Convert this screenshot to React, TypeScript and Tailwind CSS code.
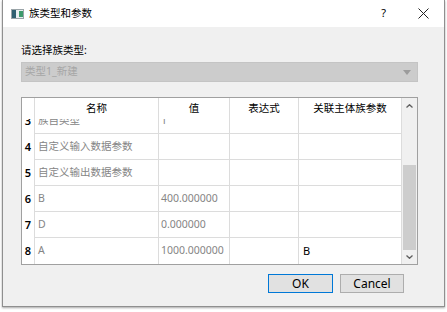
const FONT = { fontFamily: '"Noto Sans", "Noto Sans CJK SC", sans-serif' };

interface Row {
  no: string;
  name: string;
  value: string;
  expr: string;
  assoc: string;
}

const rows: Row[] = [
  { no: "4", name: "自定义输入数据参数", value: "", expr: "", assoc: "" },
  { no: "5", name: "自定义输出数据参数", value: "", expr: "", assoc: "" },
  { no: "6", name: "B", value: "400.000000", expr: "", assoc: "" },
  { no: "7", name: "D", value: "0.000000", expr: "", assoc: "" },
  { no: "8", name: "A", value: "1000.000000", expr: "", assoc: "B" },
];

function AppIcon() {
  return (
    <svg width="13" height="10" viewBox="0 0 13 10">
      <rect x="0.5" y="0.5" width="12" height="9" fill="#e8eef0" stroke="#9aa4a8" />
      <rect x="1" y="1" width="4" height="8" fill="#2f5f70" />
      <rect x="8" y="2" width="4" height="6" fill="#3e9a6c" />
    </svg>
  );
}

function DataRow({ row, last }: { row: Row; last?: boolean }) {
  return (
    <div className="flex h-[26px] text-[10.5px]">
      <div className="w-[13px] shrink-0 border-r border-[#dcdcdc] flex items-center justify-center text-[11px] font-semibold text-black">
        {row.no}
      </div>
      <div className={`w-[124px] shrink-0 border-r border-[#dcdcdc] ${last ? "" : "border-b"} flex items-center pl-[3px] text-[#858585] whitespace-nowrap overflow-hidden`}>
        {row.name}
      </div>
      <div className={`w-[71px] shrink-0 border-r border-[#dcdcdc] ${last ? "" : "border-b"} flex items-center pl-[2px] text-[#858585] whitespace-nowrap overflow-hidden`}>
        {row.value}
      </div>
      <div className={`w-[69px] shrink-0 border-r border-[#dcdcdc] ${last ? "" : "border-b"} flex items-center pl-[3px] text-[#858585]`}>
        {row.expr}
      </div>
      <div className={`w-[103px] shrink-0 border-r border-[#dcdcdc] ${last ? "" : "border-b"} flex items-center pl-[4px] text-[11px] text-black`}>
        {row.assoc}
      </div>
    </div>
  );
}

export default function App() {
  return (
    <div className="w-[447px] h-[312px] bg-white overflow-hidden" style={FONT}>
      <div className="ml-[2px] w-[443px] h-[307px] border-l border-r border-b border-[#8f8f8f] bg-[#f0f0f0] shadow-[0_1px_2px_rgba(0,0,0,0.35)] flex flex-col">
        {/* title bar */}
        <div className="h-[27px] bg-white flex items-center pl-[8px] pr-[15px] shrink-0">
          <AppIcon />
          <span className="ml-[5px] text-[10.5px] text-black">族类型和参数</span>
          <span className="ml-auto mr-[32px] text-[11px] text-black">?</span>
          <svg width="11" height="11" viewBox="0 0 11 11">
            <path d="M0.5 0.5 L10.5 10.5 M10.5 0.5 L0.5 10.5" stroke="#222" strokeWidth="1" />
          </svg>
        </div>

        {/* body */}
        <div className="pl-[18px] flex flex-col">
          <div className="mt-[15px] h-[16px] text-[10.5px] leading-[16px] text-black">请选择族类型:</div>
          <div className="mt-[4px] w-[397px] h-[20px] bg-[#cccccc] border border-[#c4c4c4] flex items-center pl-[3px] pr-[6px] text-[10.5px] text-[#a6a6a6]">
            <span>类型1_新建</span>
            <svg className="ml-auto" width="8" height="5" viewBox="0 0 8 5">
              <path d="M0 0 L8 0 L4 5 Z" fill="#9c9c9c" />
            </svg>
          </div>

          {/* table */}
          <div className="mt-[15px] w-[397px] h-[168px] border border-[#a0a0a0] bg-white flex">
            <div className="flex flex-col w-[380px]">
              {/* header */}
              <div className="flex h-[21px] text-[10.5px] text-black">
                <div className="w-[13px] shrink-0 border-r border-[#dcdcdc]" />
                <div className="w-[124px] shrink-0 border-r border-[#dcdcdc] flex items-center justify-center">名称</div>
                <div className="w-[71px] shrink-0 border-r border-[#dcdcdc] flex items-center justify-center">值</div>
                <div className="w-[69px] shrink-0 border-r border-[#dcdcdc] flex items-center justify-center">表达式</div>
                <div className="w-[103px] shrink-0 border-r border-[#dcdcdc] flex items-center justify-center">关联主体族参数</div>
              </div>
              {/* partially scrolled row */}
              <div className="h-[15px] overflow-hidden">
                <div className="-mt-[11px]">
                  <DataRow row={{ no: "3", name: "族自类型", value: "1", expr: "", assoc: "" }} />
                </div>
              </div>
              {rows.map((r, i) => (
                <DataRow key={r.no} row={r} last={i === rows.length - 1} />
              ))}
            </div>
            {/* scrollbar */}
            <div className="w-[15px] bg-[#f0f0f0] flex flex-col items-center">
              <div className="h-[16px] flex items-center justify-center">
                <svg width="7" height="4" viewBox="0 0 7 4">
                  <path d="M0.5 3.5 L3.5 0.7 L6.5 3.5" fill="none" stroke="#606060" strokeWidth="1.3" />
                </svg>
              </div>
              <div className="mt-[51px] w-[13px] h-[86px] bg-[#cdcdcd]" />
              <div className="mt-auto h-[14px] flex items-center justify-center">
                <svg width="7" height="4" viewBox="0 0 7 4">
                  <path d="M0.5 0.5 L3.5 3.3 L6.5 0.5" fill="none" stroke="#606060" strokeWidth="1.3" />
                </svg>
              </div>
            </div>
          </div>

          {/* buttons */}
          <div className="mt-[9px] flex gap-[7px] pl-[247px]">
            <button className="w-[65px] h-[19px] border border-[#0078d7] bg-[#e1e1e1] text-[12px] text-black flex items-center justify-center">
              OK
            </button>
            <button className="w-[64px] h-[19px] border border-[#adadad] bg-[#e1e1e1] text-[12px] text-black flex items-center justify-center">
              Cancel
            </button>
          </div>
        </div>
      </div>
    </div>
  );
}
